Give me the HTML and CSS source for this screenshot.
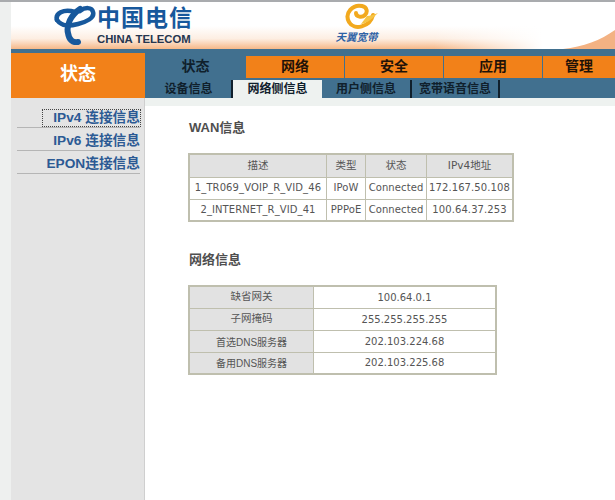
FILE: index.html
```html
<!DOCTYPE html>
<html lang="zh-CN">

<head>
    <meta charset="UTF-8">
    <title>状态 - 网络侧信息</title>
    <link rel="stylesheet" href="styles.css">
</head>

<body>
    <div class="topline"></div>

    <div class="header">
        <svg class="swoosh" width="604" height="47" viewBox="0 0 604 47" preserveAspectRatio="none">
            <defs>
                <linearGradient id="fade" x1="0" y1="0" x2="0" y2="1">
                    <stop offset="0" stop-color="#ffffff" />
                    <stop offset="0.55" stop-color="#fdeee2" />
                    <stop offset="1" stop-color="#f6b888" />
                </linearGradient>
                <linearGradient id="fadeRight" x1="0" y1="0" x2="1" y2="0">
                    <stop offset="0" stop-color="#ffffff" stop-opacity="0" />
                    <stop offset="0.7" stop-color="#ffffff" stop-opacity="0" />
                    <stop offset="0.88" stop-color="#ffffff" stop-opacity="1" />
                </linearGradient>
            </defs>
            <rect x="0" y="24" width="604" height="23" fill="url(#fade)" />
            <rect x="0" y="24" width="604" height="23" fill="url(#fadeRight)" />
            <path d="M552 47 C572 45 590 38 604 28 L604 47 Z" fill="#f3b283" />
        </svg>

        <div class="logo">
            <svg class="logo-mark" width="42" height="40" viewBox="0 0 42 40">
                <path d="M26 4 C17 10 12 20 14 28 C15 35 19 38 24 37" fill="none" stroke="#17589c" stroke-width="6" stroke-linecap="round" />
                <path d="M3 15 C1 9 9 3 21 7" fill="none" stroke="#17589c" stroke-width="4.5" stroke-linecap="round" />
                <path d="M3 15 C8 22 16 21 24 19 C32 17 41 13 39 7 C38 2 31 2 26 6" fill="none" stroke="#17589c" stroke-width="4.5" stroke-linecap="round" />
            </svg>
            <div class="logo-text">
                <div class="logo-cn">中国电信</div>
                <div class="logo-en">CHINA TELECOM</div>
            </div>
        </div>

        <div class="brand">
            <svg width="34" height="28" viewBox="0 0 34 28">
                <path d="M29 12 C26 24 10 28 5 19 C0 10 9 1 18 3 C23 4 24 9 21 12 C18 15 12 14 12 10" fill="none" stroke="#f2a91e" stroke-width="4" stroke-linecap="round" />
                <path d="M17 21 C24 20 29 15 34 10 C29 12 26 13 23 13" fill="#f6c445" />
            </svg>
            <div class="brand-name">天翼宽带</div>
        </div>
    </div>

    <div class="nav">
        <div class="section-title">状态</div>
        <div class="nav-right">
            <div class="menu">
                <div class="menu-item current">状态</div>
                <div class="menu-item">网络</div>
                <div class="menu-item">安全</div>
                <div class="menu-item">应用</div>
                <div class="menu-item last">管理</div>
            </div>
            <div class="submenu">
                <div class="sub-item first">设备信息</div>
                <div class="sub-item active">网络侧信息</div>
                <div class="sub-item">用户侧信息</div>
                <div class="sub-item voice">宽带语音信息</div>
            </div>
        </div>
    </div>

    <div class="main">
        <div class="sidebar">
            <div class="side-link"><span class="focused">IPv4 连接信息</span></div>
            <div class="side-link"><span>IPv6 连接信息</span></div>
            <div class="side-link"><span>EPON连接信息</span></div>
        </div>

        <div class="content">
            <h2>WAN信息</h2>
            <table class="wan">
                <tr class="head">
                    <th class="c1">描述</th>
                    <th class="c2">类型</th>
                    <th class="c3">状态</th>
                    <th class="c4">IPv4地址</th>
                </tr>
                <tr>
                    <td>1_TR069_VOIP_R_VID_46</td>
                    <td>IPoW</td>
                    <td>Connected</td>
                    <td>172.167.50.108</td>
                </tr>
                <tr>
                    <td>2_INTERNET_R_VID_41</td>
                    <td>PPPoE</td>
                    <td>Connected</td>
                    <td>100.64.37.253</td>
                </tr>
            </table>

            <h2 class="second">网络信息</h2>
            <table class="info">
                <tr>
                    <th class="label raised">缺省网关</th>
                    <td>100.64.0.1</td>
                </tr>
                <tr>
                    <th class="raised">子网掩码</th>
                    <td>255.255.255.255</td>
                </tr>
                <tr>
                    <th class="dns">首选DNS服务器</th>
                    <td>202.103.224.68</td>
                </tr>
                <tr>
                    <th class="dns">备用DNS服务器</th>
                    <td>202.103.225.68</td>
                </tr>
            </table>
        </div>
    </div>
</body>

</html>
```

FILE: styles.css
```css
html,
body {
    margin: 0;
    height: 500px;
    overflow: hidden;
}

body {
    display: flex;
    flex-direction: column;
    background-color: #eef0ef;
    font-family: "Liberation Sans", "Noto Sans CJK SC", sans-serif;
}

.topline {
    height: 2px;
    background-color: #a9abae;
}

.header {
    position: relative;
    display: flex;
    height: 47px;
    margin-left: 11px;
    background-color: #fff;
}

.swoosh {
    position: absolute;
    left: 0;
    top: 0;
}

.logo {
    position: relative;
    display: flex;
    margin-left: 43px;
    padding-top: 3px;
}

.logo-text {
    margin-left: 1px;
}

.logo-cn {
    font-size: 23px;
    line-height: 27px;
    font-weight: bold;
    color: #17589c;
    letter-spacing: 1px;
    white-space: nowrap;
}

.logo-en {
    margin-top: 2px;
    font-size: 11.3px;
    line-height: 11px;
    font-weight: bold;
    color: #26364f;
    white-space: nowrap;
}

.brand {
    position: relative;
    margin-left: 142px;
    text-align: center;
}

.brand svg {
    display: block;
    margin: 1px 0 0 9px;
}

.brand-name {
    font-size: 10.5px;
    line-height: 13px;
    font-weight: bold;
    font-style: italic;
    color: #2f62a5;
    white-space: nowrap;
}

.nav {
    display: flex;
    height: 49px;
    margin-left: 11px;
    background-color: #41708f;
}

.section-title {
    flex-shrink: 0;
    width: 134px;
    height: 45px;
    margin-top: 4px;
    background-color: #f28119;
    color: #fff;
    font-size: 18px;
    font-weight: bold;
    line-height: 42px;
    text-align: center;
}

.nav-right {
    flex: 1;
    min-width: 0;
    padding-left: 1px;
}

.menu {
    display: flex;
    gap: 1px;
    height: 22px;
    margin-top: 7px;
}

.menu-item {
    flex-shrink: 0;
    width: 98px;
    background-color: #f28119;
    color: #1f1208;
    font-size: 14px;
    font-weight: bold;
    line-height: 20px;
    text-align: center;
}

.menu-item.current {
    width: 99px;
    background-color: transparent;
    color: #10202c;
}

.menu-item.last {
    flex: 1;
}

.submenu {
    display: flex;
    height: 18px;
    margin-top: 2px;
}

.sub-item {
    flex-shrink: 0;
    width: 88px;
    border-right: 2px solid #10202c;
    color: #10202c;
    font-size: 12px;
    font-weight: bold;
    line-height: 19px;
    text-align: center;
}

.sub-item.first {
    width: 85px;
}

.sub-item.active {
    width: 89px;
    border-right: none;
    background-color: #eef2f0;
}

.sub-item.voice {
    width: 86px;
}

.main {
    flex: 1;
    display: flex;
    margin-left: 11px;
}

.sidebar {
    flex-shrink: 0;
    width: 123px;
    padding: 7px 4px 0 6px;
    background-color: #e4e4e4;
    border-right: 1px solid #cfcfcf;
}

.side-link {
    height: 17px;
    margin-top: 5px;
    border-bottom: 1px solid #b5b5b5;
    text-align: right;
    color: #2c5a94;
    font-size: 13.7px;
    font-weight: bold;
    line-height: 16px;
}

.side-link span {
    display: inline-block;
    padding-left: 10px;
    white-space: nowrap;
}

.side-link .focused {
    outline: 1px dotted #444;
}

.content {
    flex: 1;
    padding: 13px 0 0 44px;
    background-color: #fff;
    border-top: 8px solid #eef2f0;
    color: #555;
}

h2 {
    margin: 0 0 17px;
    font-size: 13px;
    font-weight: bold;
    line-height: 17px;
    color: #4f4f4f;
}

h2.second {
    margin-top: 29px;
}

table {
    margin-left: -1px;
    border-collapse: collapse;
    border: 2px solid #bfbfae;
    table-layout: fixed;
    font-size: 10px;
    color: #555;
}

th,
td {
    padding: 0;
    border: 1px solid #bfbfae;
    font-family: "DejaVu Sans", "Noto Sans CJK SC", sans-serif;
    font-weight: normal;
    text-align: center;
    white-space: nowrap;
}

th {
    background-color: #e2e2e2;
    font-size: 10.5px;
}

th.raised {
    padding-bottom: 3px;
}

th.dns {
    font-family: "Liberation Sans", "Noto Sans CJK SC", sans-serif;
    font-size: 10px;
}

.wan {
    width: 326px;
}

.wan tr {
    height: 22px;
}

.wan tr.head {
    height: 23px;
}

.wan tr.head th {
    padding-bottom: 3px;
}

.wan td {
    padding-bottom: 1px;
    letter-spacing: 0.1px;
}

.c1 {
    width: 136px;
}

.c2 {
    width: 38px;
}

.c3 {
    width: 60px;
}

.info {
    width: 309px;
}

.info tr {
    height: 22px;
}

.label {
    width: 123px;
}
```
